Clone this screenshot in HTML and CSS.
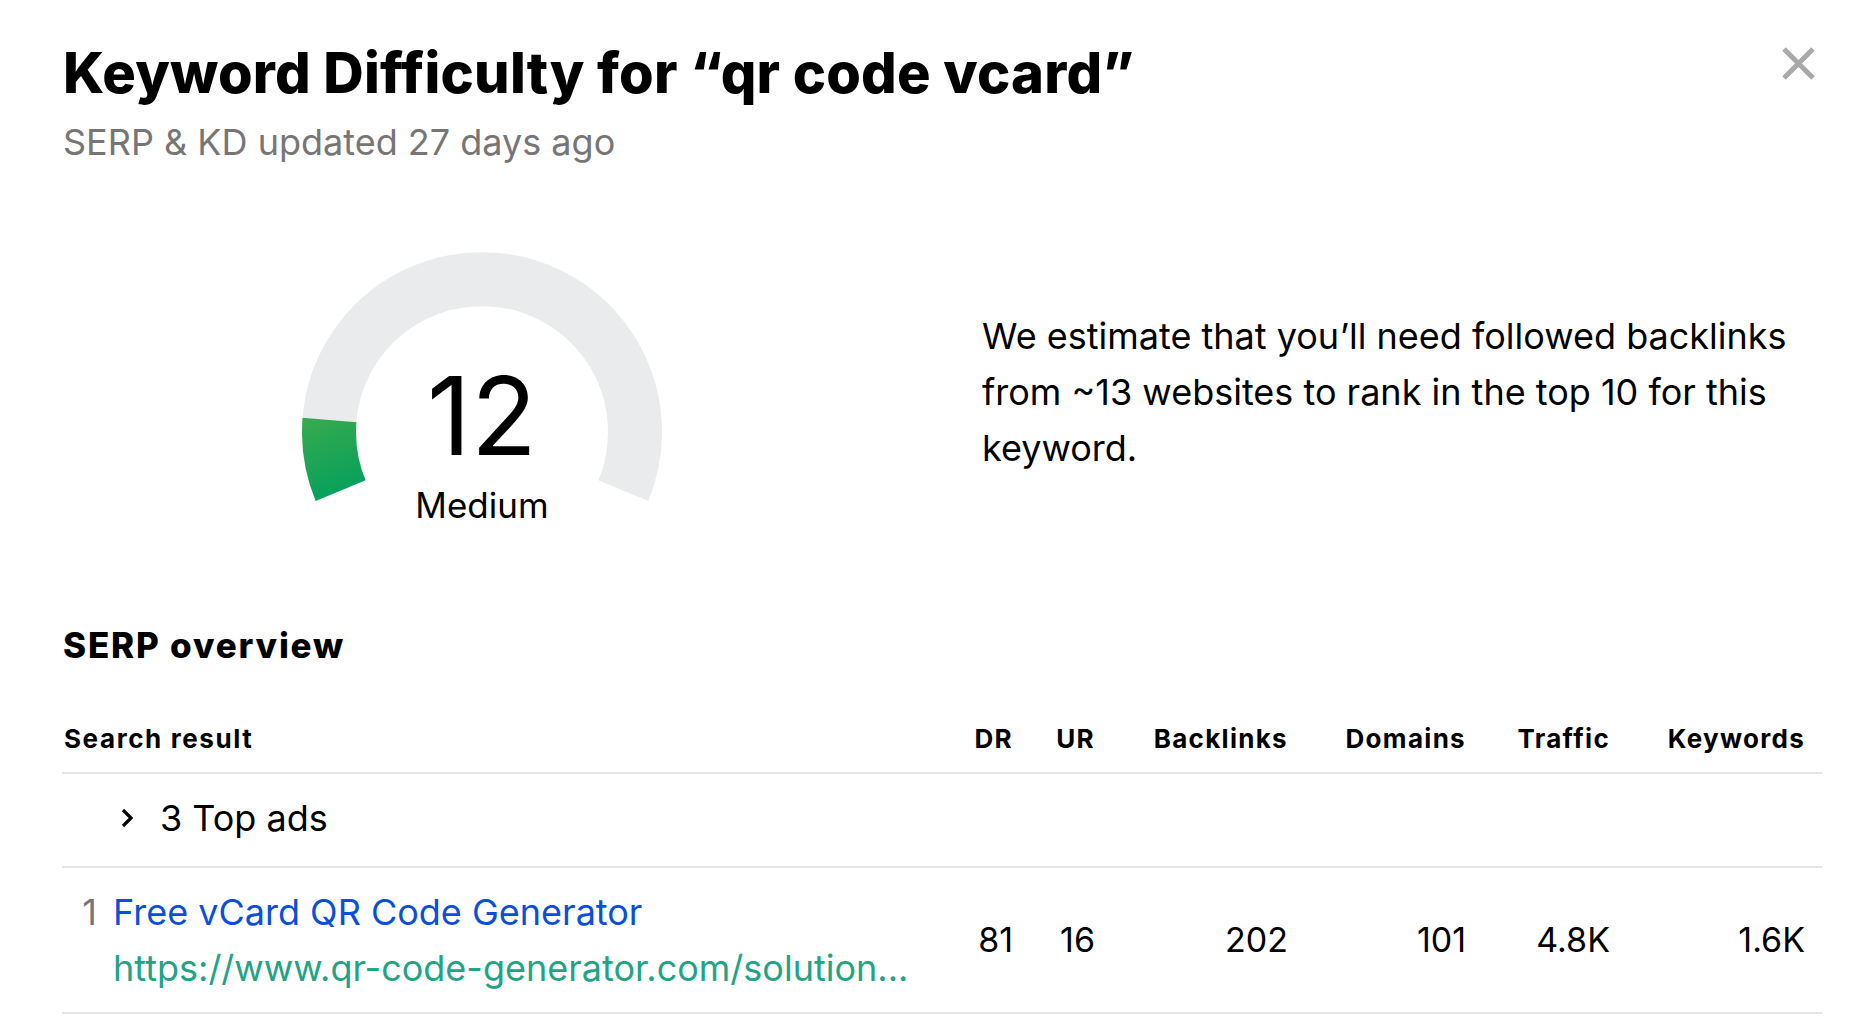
FILE: index.html
```html
<!DOCTYPE html>
<html lang="en">
<head>
<meta charset="utf-8">
<title>Keyword Difficulty</title>
<link rel="stylesheet" href="styles.css">
</head>
<body>
<div class="modal">
  <button class="close" aria-label="Close">
    <svg width="33" height="33" viewBox="0 0 33 33"><path d="M2 2 L31 31 M31 2 L2 31" stroke="#a9a9a9" stroke-width="5" fill="none"/></svg>
  </button>
  <h1 class="title">Keyword Difficulty for “qr code vcard”</h1>
  <div class="subtitle">SERP &amp; KD updated 27 days ago</div>

  <section class="kd">
    <div class="gauge-col">
      <div class="gauge">
        <svg class="gauge-svg" width="360" height="270" viewBox="0 0 360 270">
          <defs>
            <linearGradient id="g" gradientUnits="userSpaceOnUse" x1="10" y1="168" x2="45" y2="250">
              <stop offset="0" stop-color="#35aa4e"/>
              <stop offset="1" stop-color="#009f5f"/>
            </linearGradient>
          </defs>
          <path d="M38.6 238.6 A153 153 0 1 1 321.4 238.6" stroke="#eaebed" stroke-width="54" fill="none"/>
          <path d="M38.6 238.6 A153 153 0 0 1 27.5 168.0" stroke="url(#g)" stroke-width="54" fill="none"/>
        </svg>
        <div class="gauge-value">12</div>
        <div class="gauge-label">Medium</div>
      </div>
    </div>
    <p class="estimate">We estimate that you’ll need followed backlinks from ~13 websites to rank in the top 10 for this keyword.</p>
  </section>

  <h2 class="serp-title">SERP overview</h2>

  <div class="serp">
    <div class="row head">
      <div class="cell result">Search result</div>
      <div class="cell num">DR</div>
      <div class="cell num">UR</div>
      <div class="cell num">Backlinks</div>
      <div class="cell num">Domains</div>
      <div class="cell num">Traffic</div>
      <div class="cell num">Keywords</div>
    </div>
    <div class="row ads">
      <div class="ads-cell">
        <svg class="chev" width="12" height="20" viewBox="0 0 12 20"><path d="M2 2 L10 10 L2 18" stroke="#000" stroke-width="3.2" fill="none"/></svg>
        <span>3 Top ads</span>
      </div>
    </div>
    <div class="row item">
      <div class="cell result">
        <span class="rank">1</span>
        <div class="link">
          <div class="link-title">Free vCard QR Code Generator</div>
          <div class="link-url">https://www.qr-code-generator.com/solution...</div>
        </div>
      </div>
      <div class="cell num">81</div>
      <div class="cell num">16</div>
      <div class="cell num">202</div>
      <div class="cell num">101</div>
      <div class="cell num">4.8K</div>
      <div class="cell num">1.6K</div>
    </div>
  </div>
</div>
</body>
</html>
```

FILE: styles.css
```css
* { box-sizing: border-box; }
html, body { margin: 0; padding: 0; background: #fff; }
body {
  font-family: Inter, "Noto Sans", sans-serif;
  color: #000;
}
.modal {
  position: relative;
  padding: 39px 36px 0 62px;
}
.close {
  position: absolute;
  left: 1782px;
  top: 47px;
  width: 33px;
  height: 33px;
  padding: 0;
  border: 0;
  background: none;
}
.close svg { display: block; }
.title {
  margin: 0 0 0 1px;
  font-size: 56px;
  line-height: 68px;
  font-weight: 800;
  letter-spacing: 0.2px;
}
.subtitle {
  margin: 13px 0 0 1px;
  font-size: 36px;
  line-height: 44px;
  color: #767676;
}
.kd {
  margin-top: 88px;
  display: grid;
  grid-template-columns: 1fr 1fr;
  column-gap: 80px;
  align-items: center;
}
.gauge-col {
  display: flex;
  justify-content: center;
}
.gauge {
  position: relative;
  width: 360px;
  height: 280px;
}
.gauge-svg { display: block; }
.gauge-value {
  position: absolute;
  left: 0;
  right: 0;
  top: 110px;
  text-align: center;
  font-size: 108px;
  line-height: 108px;
  font-weight: 400;
}
.gauge-label {
  position: absolute;
  left: 0;
  right: 0;
  top: 236px;
  text-align: center;
  font-size: 35px;
  line-height: 35px;
}
.estimate {
  margin: 0;
  font-size: 36px;
  line-height: 56px;
}
.serp-title {
  margin: 93px 0 40px 1px;
  font-size: 35px;
  line-height: 40px;
  font-weight: 800;
  letter-spacing: 1.8px;
}
.row {
  display: grid;
  grid-template-columns: 1fr 82px 82px 193px 178px 144px 195px;
  border-bottom: 2px solid #e5e5e5;
}
.head {
  padding: 18px 0 17px;
  font-size: 26px;
  line-height: 32px;
  font-weight: 700;
  letter-spacing: 1.3px;
}
.head .result { padding-left: 2px; letter-spacing: 1.6px; }
.cell.num {
  text-align: right;
  padding-right: 17px;
}
.ads {
  display: block;
  padding: 22px 0 26px;
}
.ads-cell {
  display: flex;
  align-items: center;
  padding-left: 59px;
  font-size: 36px;
  line-height: 44px;
}
.chev { margin-right: 27px; }
.item {
  padding: 16px 0;
  align-items: center;
  font-size: 34px;
  line-height: 56px;
}
.item .result {
  display: flex;
  align-items: flex-start;
}
.rank {
  width: 51px;
  padding-right: 16px;
  text-align: right;
  color: #767676;
  font-size: 36px;
}
.link { font-size: 36px; }
.link-title { color: #0b4fd9; }
.link-url { color: #22a385; }
```
